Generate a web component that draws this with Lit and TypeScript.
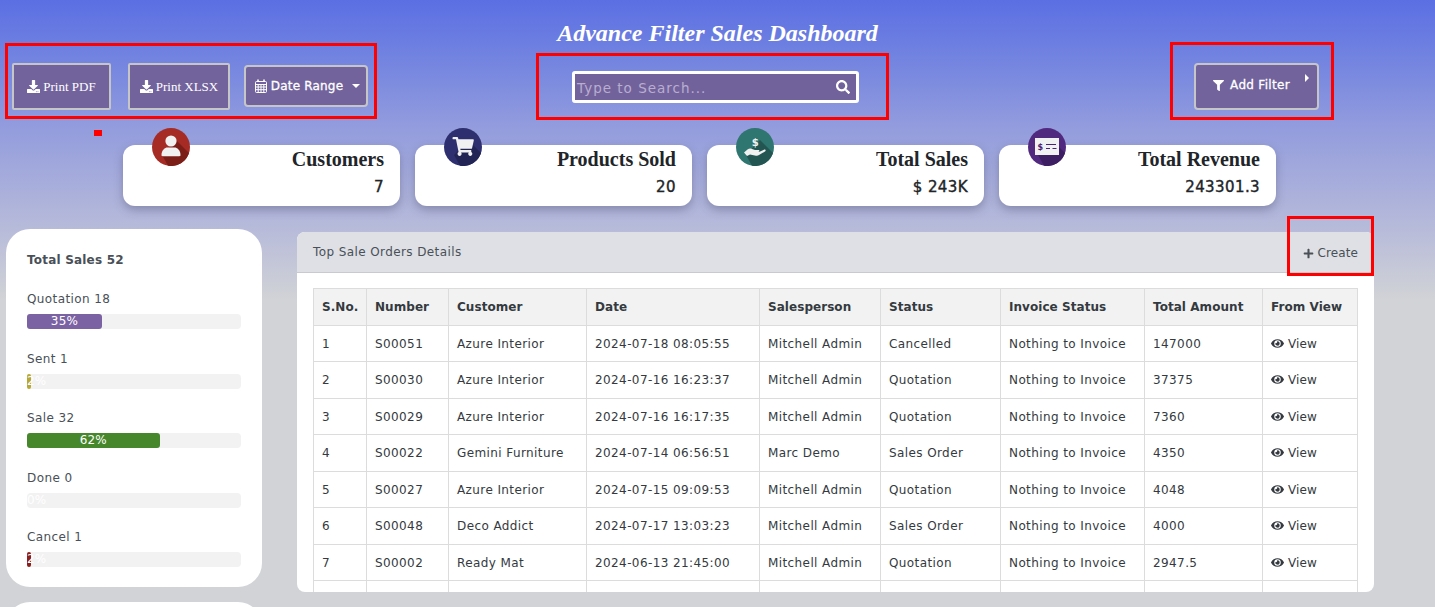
import { LitElement, html, css, svg } from "lit";
import { customElement } from "lit/decorators.js";

const ICONS = {
  download: ["0 0 512 512", "M216 0h80c13.3 0 24 10.7 24 24v168h87.7c17.8 0 26.7 21.5 14.1 34.1L269.7 378.3c-7.5 7.5-19.8 7.5-27.3 0L90.1 226.1c-12.6-12.6-3.7-34.1 14.1-34.1H192V24c0-13.3 10.7-24 24-24zm296 376v112c0 13.3-10.7 24-24 24H24c-13.3 0-24-10.7-24-24V376c0-13.3 10.7-24 24-24h146.7l49 49c20.1 20.1 52.5 20.1 72.6 0l49-49H488c13.3 0 24 10.7 24 24zm-124 88c0-11-9-20-20-20s-20 9-20 20 9 20 20 20 20-9 20-20zm64 0c0-11-9-20-20-20s-20 9-20 20 9 20 20 20 20-9 20-20z"],
  search: ["0 0 512 512", "M505 442.7L405.3 343c-4.5-4.5-10.6-7-17-7H372c27.6-35.3 44-79.7 44-128C416 93.1 322.9 0 208 0S0 93.1 0 208s93.1 208 208 208c48.3 0 92.7-16.4 128-44v16.3c0 6.4 2.5 12.5 7 17l99.7 99.7c9.4 9.4 24.6 9.4 33.9 0l28.3-28.3c9.4-9.4 9.4-24.6.1-34zM208 336c-70.7 0-128-57.2-128-128 0-70.7 57.2-128 128-128 70.7 0 128 57.2 128 128 0 70.7-57.2 128-128 128z"],
  filter: ["0 0 512 512", "M487.976 0H24.028C2.71 0-8.047 25.866 7.058 40.971L192 225.941V432c0 7.831 3.821 15.17 10.237 19.662l80 55.98C298.02 518.69 320 507.493 320 487.98V225.941l184.947-184.97C520.021 25.896 509.338 0 487.976 0z"],
  plus: ["0 0 448 512", "M416 208H272V64c0-17.67-14.33-32-32-32h-32c-17.67 0-32 14.33-32 32v144H32c-17.67 0-32 14.33-32 32v32c0 17.67 14.33 32 32 32h144v144c0 17.67 14.33 32 32 32h32c17.67 0 32-14.33 32-32V304h144c17.67 0 32-14.33 32-32v-32c0-17.67-14.33-32-32-32z"],
  eye: ["0 0 576 512", "M572.52 241.4C518.29 135.59 410.93 64 288 64S57.68 135.64 3.48 241.41a32.35 32.35 0 0 0 0 29.19C57.71 376.41 165.07 448 288 448s230.32-71.64 284.52-177.41a32.35 32.35 0 0 0 0-29.19zM288 400a144 144 0 1 1 144-144 143.93 143.93 0 0 1-144 144zm0-240a95.31 95.31 0 0 0-25.31 3.79 47.85 47.85 0 0 1-66.9 66.9A95.78 95.78 0 1 0 288 160z"],
};

const icon = (name: keyof typeof ICONS, size: number) => html`
  <svg class="ico" width=${size} height=${size} viewBox=${ICONS[name][0]} fill="currentColor"><path d=${ICONS[name][1]}></path></svg>
`;

const calendar = html`
  <svg class="ico" width="12" height="14" viewBox="0 0 12 14" fill="none" stroke="currentColor" stroke-width="1">
    <rect x="0.5" y="2.5" width="11" height="11" rx="1"></rect>
    <path d="M0.5 5.5h11M0.5 8h11M0.5 10.7h11M3.2 5.5v8M6 5.5v8M8.8 5.5v8"></path>
    <path d="M3 0.5v2.5M9 0.5v2.5" stroke-width="1.6"></path>
  </svg>
`;

const BADGES = {
  user: svg`
    <circle cx="19" cy="13" r="5.6" fill="#f1f1f1"></circle>
    <path d="M9.5 27c0-5 3.5-7.5 6-7.5h7c2.5 0 6 2.500 6 7.5 0 .8-.5 1.200-1.200 1.200H10.700c-.7 0-1.200-.4-1.200-1.200z" fill="#f1f1f1"></path>`,
  cart: svg`
    <g transform="translate(8.500 9) scale(0.037)"><path fill="#f1f1f1" d="M528.12 301.319l47.273-208C578.806 78.301 567.391 64 551.99 64H159.208l-9.166-44.81C147.758 8.021 137.93 0 126.529 0H24C10.745 0 0 10.745 0 24v16c0 13.255 10.745 24 24 24h69.883l70.248 343.435C147.325 417.1 136 435.222 136 456c0 30.928 25.072 56 56 56s56-25.072 56-56c0-15.674-6.447-29.835-16.824-40h209.647C430.447 426.165 424 440.326 424 456c0 30.928 25.072 56 56 56s56-25.072 56-56c0-22.172-12.888-41.332-31.579-50.405l5.517-24.276c3.413-15.018-8.002-29.319-23.403-29.319H218.117l-6.545-32h293.145c11.206 0 20.92-7.754 23.403-18.681z"></path></g>`,
  hand: svg`
    <text x="19.500" y="18" text-anchor="middle" font-family="DejaVu Sans" font-weight="700" font-size="10" fill="#f1f1f1">$</text>
    <path d="M8 24.500l3.500-3c1.500-1 3-1.200 4.500-.6l3 1h3.500c1.200 0 1.200 2-.2 2H18.500h4.500l5-2.200c1.500-.5 2.300 1 1 1.800l-6 3.600c-1 .6-2 .8-3 .6l-6-1.200-3 1.500z" fill="#f1f1f1"></path>`,
  check: svg`
    <rect x="7" y="10" width="24" height="17" fill="#f1f1f1"></rect>
    <text x="12.500" y="21.500" text-anchor="middle" font-family="DejaVu Sans" font-weight="700" font-size="8" fill="#4a2376">$</text>
    <path d="M18 16.500h10M18 20.500h4M24.500 20.500h4" stroke="#4a2376" stroke-width="1.200" fill="none"></path>`,
};

const CARDS = [
  { title: "Customers", value: "7", color: "#a62b24", shade: "#7c1e18", badge: "user" },
  { title: "Products Sold", value: "20", color: "#2e2f6e", shade: "#232456", badge: "cart" },
  { title: "Total Sales", value: "$ 243K", color: "#2f7570", shade: "#235652", badge: "hand" },
  { title: "Total Revenue", value: "243301.3", color: "#512a80", shade: "#3d1e63", badge: "check" },
] as const;

const STAGES = [
  { label: "Quotation 18", pct: 35, color: "#7b62a3" },
  { label: "Sent 1", pct: 2, color: "#b9a82f" },
  { label: "Sale 32", pct: 62, color: "#46872b" },
  { label: "Done 0", pct: 0, color: "#8a8a8a" },
  { label: "Cancel 1", pct: 2, color: "#8c1d18" },
];

const COLUMNS = ["S.No.", "Number", "Customer", "Date", "Salesperson", "Status", "Invoice Status", "Total Amount", "From View"];

const ORDERS = [
  ["1", "S00051", "Azure Interior", "2024-07-18 08:05:55", "Mitchell Admin", "Cancelled", "Nothing to Invoice", "147000"],
  ["2", "S00030", "Azure Interior", "2024-07-16 16:23:37", "Mitchell Admin", "Quotation", "Nothing to Invoice", "37375"],
  ["3", "S00029", "Azure Interior", "2024-07-16 16:17:35", "Mitchell Admin", "Quotation", "Nothing to Invoice", "7360"],
  ["4", "S00022", "Gemini Furniture", "2024-07-14 06:56:51", "Marc Demo", "Sales Order", "Nothing to Invoice", "4350"],
  ["5", "S00027", "Azure Interior", "2024-07-15 09:09:53", "Mitchell Admin", "Quotation", "Nothing to Invoice", "4048"],
  ["6", "S00048", "Deco Addict", "2024-07-17 13:03:23", "Mitchell Admin", "Sales Order", "Nothing to Invoice", "4000"],
  ["7", "S00002", "Ready Mat", "2024-06-13 21:45:00", "Mitchell Admin", "Quotation", "Nothing to Invoice", "2947.5"],
];

@customElement("app-root")
export class AppRoot extends LitElement {
  static styles = css`
    :host {
      display: block;
      position: relative;
      height: 607px;
      overflow: hidden;
      font-family: "DejaVu Sans", sans-serif;
      font-size: 12px;
      letter-spacing: 0.4px;
      color: #343a40;
      background: linear-gradient(180deg, #5b6fe3 0, #7384e0 60px, #949ddd 130px, #b4b8da 220px, #d1d3d6 300px);
    }

    .ico { display: inline-block; vertical-align: -2px; }

    h1 {
      margin: 0;
      padding-top: 19px;
      height: 28px;
      text-align: center;
      font: italic bold 24px/28px "Liberation Serif", serif;
      letter-spacing: 0;
      color: #fff;
    }

    .toolbar {
      display: grid;
      grid-template-columns: 560px 287px 1fr;
      align-items: center;
      height: 47px;
      margin-top: 16px;
      padding: 0 116px 0 12px;
    }

    .left { display: flex; align-items: center; }

    .btn {
      box-sizing: border-box;
      display: flex;
      align-items: center;
      justify-content: center;
      height: 47px;
      background: #72639c;
      border: 2px solid #c6c6c8;
      border-radius: 2px;
      color: #fff;
    }

    .print { font: 13px "Liberation Serif", serif; letter-spacing: 0; gap: 3px; }
    .print.pdf { width: 99px; margin-right: 17px; }
    .print.xlsx { width: 102px; margin-right: 14px; }

    .medium { -webkit-text-stroke: 0.3px currentColor; }

    .date {
      width: 124px;
      height: 42px;
      margin-bottom: 1px;
      padding-left: 3px;
      border-radius: 4px;
      letter-spacing: 0.2px;
      gap: 4px;
    }

    .caret {
      width: 0;
      height: 0;
      margin-left: 5px;
      border: 4px solid transparent;
      border-top-color: #fff;
      border-bottom-width: 0;
    }

    .search {
      box-sizing: border-box;
      display: flex;
      align-items: center;
      justify-content: space-between;
      height: 32px;
      padding: 0 6px 0 2px;
      background: #72629c;
      border: 3px solid #fff;
      border-radius: 3px;
      color: #fff;
    }

    .search span { color: #b9aecf; font-size: 13.500px; letter-spacing: 1px; padding-top: 2px; }

    .filter {
      position: relative;
      justify-self: end;
      width: 125px;
      border-radius: 4px;
      letter-spacing: 0.3px;
      gap: 6px;
      padding: 0 10px 3px 0;
    }

    .filter i {
      position: absolute;
      top: 9px;
      right: 8px;
      border: 4px solid transparent;
      border-left-color: #fff;
      border-right-width: 0;
    }

    .cards {
      display: flex;
      gap: 15px;
      margin: 35px 0 0 123px;
    }

    .card {
      box-sizing: border-box;
      position: relative;
      width: 277px;
      height: 61px;
      padding: 3px 16px 0;
      text-align: right;
      background: #fff;
      border-radius: 12px;
      box-shadow: 0 4px 10px rgba(60, 60, 90, 0.35);
    }

    .card h3 {
      margin: 0;
      font: bold 20px/22px "Liberation Serif", serif;
      letter-spacing: 0;
      color: #212529;
    }

    .card p {
      margin: 8px 0 0;
      font-size: 15px;
      line-height: 18px;
      letter-spacing: 0.4px;
      -webkit-text-stroke: 0.4px currentColor;
      color: #212529;
    }

    .badge {
      position: absolute;
      top: -17px;
      left: 29px;
      width: 38px;
      height: 38px;
    }

    .main {
      display: grid;
      grid-template-columns: 256px 1077px;
      gap: 35px;
      margin: 23px 0 0 6px;
      align-items: start;
    }

    .side { display: flex; flex-direction: column; gap: 15px; }

    .panel {
      box-sizing: border-box;
      height: 358px;
      padding: 23px 21px 0;
      background: #fff;
      border-radius: 24px;
      color: #495057;
    }

    .panel + .panel { height: 60px; }

    .panel h4 { margin: 0 0 23px; font-size: 12px; line-height: 16px; font-weight: 700; letter-spacing: 0.2px; }

    .stage { height: 59.500px; }
    .stage label { display: block; line-height: 16px; }

    .track {
      height: 15px;
      margin-top: 7px;
      background: #f2f2f2;
      border-radius: 4px;
    }

    .fill {
      height: 100%;
      border-radius: 3px;
      font-size: 12px;
      line-height: 15px;
      letter-spacing: 0.2px;
      color: #fff;
      text-align: center;
      white-space: nowrap;
    }

    .orders {
      box-sizing: border-box;
      height: 360px;
      margin-top: 3px;
      background: #fff;
      border-radius: 8px;
      overflow: hidden;
    }

    .orders header {
      box-sizing: border-box;
      display: flex;
      align-items: center;
      justify-content: space-between;
      height: 41px;
      padding: 0 16px;
      background: #dee0e5;
      border-bottom: 1px solid #c8cad0;
      color: #495057;
    }

    .create { display: flex; align-items: center; gap: 4px; padding-top: 2px; letter-spacing: 0.1px; }

    table {
      width: 1044px;
      margin: 15px 0 0 16px;
      border-collapse: collapse;
      table-layout: fixed;
    }

    th, td {
      box-sizing: border-box;
      height: 36.500px;
      padding: 0 8px;
      border: 1px solid #dcdcdc;
      text-align: left;
      white-space: nowrap;
      font-size: 12px;
    }

    th { background: #f2f2f2; font-weight: 700; letter-spacing: 0.05px; color: #343a40; }
    td { padding-top: 1px; color: #343a40; }
    .view { letter-spacing: 0.1px; }

    .mark {
      position: absolute;
      box-sizing: border-box;
      border: 3px solid #f00;
      pointer-events: none;
    }
  `;

  render() {
    const widths = [53, 82, 138, 173, 121, 120, 144, 118, 95];
    return html`
      <h1>Advance Filter Sales Dashboard</h1>

      <div class="toolbar">
        <div class="left">
          <div class="btn print pdf">${icon("download", 13)} Print PDF</div>
          <div class="btn print xlsx">${icon("download", 13)} Print XLSX</div>
          <div class="btn date">${calendar} <span class="medium">Date Range</span> <span class="caret"></span></div>
        </div>
        <div class="search"><span>Type to Search...</span>${icon("search", 14)}</div>
        <div class="btn filter">${icon("filter", 11)} <span class="medium">Add Filter</span><i></i></div>
      </div>

      <div class="cards">
        ${CARDS.map((c) => html`
          <div class="card">
            <svg class="badge" viewBox="0 0 38 38">
              <circle cx="19" cy="19" r="19" fill=${c.color}></circle>
              <path d="M10 27L24 12l13 13a19 19 0 0 1-21 12.800z" fill=${c.shade}></path>
              ${BADGES[c.badge]}
            </svg>
            <h3>${c.title}</h3>
            <p>${c.value}</p>
          </div>
        `)}
      </div>

      <div class="main">
        <div class="side">
          <section class="panel">
            <h4>Total Sales 52</h4>
            ${STAGES.map((s) => html`
              <div class="stage">
                <label>${s.label}</label>
                <div class="track">
                  <div class="fill" style="width:${s.pct}%;background:${s.color}">${s.pct}%</div>
                </div>
              </div>
            `)}
          </section>
          <section class="panel"></section>
        </div>

        <section class="orders">
          <header>
            <span>Top Sale Orders Details</span>
            <span class="create">${icon("plus", 11)} Create</span>
          </header>
          <table>
            <colgroup>${widths.map((w) => html`<col style="width:${w}px" />`)}</colgroup>
            <thead><tr>${COLUMNS.map((c) => html`<th>${c}</th>`)}</tr></thead>
            <tbody>
              ${ORDERS.map((row) => html`
                <tr>
                  ${row.map((v) => html`<td>${v}</td>`)}
                  <td class="view">${icon("eye", 13)} View</td>
                </tr>
              `)}
              <tr>${COLUMNS.map(() => html`<td></td>`)}</tr>
            </tbody>
          </table>
        </section>
      </div>

      <div class="mark" style="left:5px;top:43px;width:372px;height:76px"></div>
      <div class="mark" style="left:536px;top:53px;width:353px;height:67px"></div>
      <div class="mark" style="left:1170px;top:42px;width:164px;height:78px"></div>
      <div class="mark" style="left:1287px;top:216px;width:87px;height:60px"></div>
      <div class="mark" style="left:94px;top:130px;width:8px;height:4px"></div>
    `;
  }
}
